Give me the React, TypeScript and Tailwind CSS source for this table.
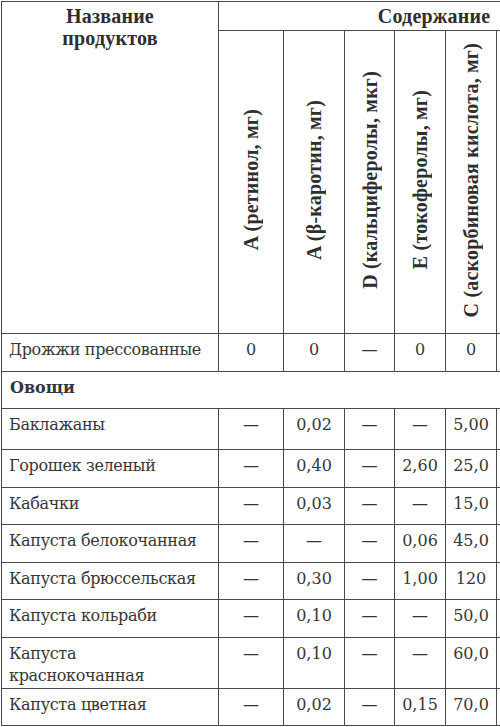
const columns = [
  "A (ретинол, мг)",
  "A (β-каротин, мг)",
  "D (кальциферолы, мкг)",
  "E (токоферолы, мг)",
  "C (аскорбиновая кислота, мг)",
  "",
  "",
  "",
];

type Row = { name: string; values: string[]; height: string } | { group: string; height: string };

const rows: Row[] = [
  { name: "Дрожжи прессованные", values: ["0", "0", "—", "0", "0"], height: "h-[38px]" },
  { group: "Овощи", height: "h-[37px]" },
  { name: "Баклажаны", values: ["—", "0,02", "—", "—", "5,00"], height: "h-[41px]" },
  { name: "Горошек зеленый", values: ["—", "0,40", "—", "2,60", "25,0"], height: "h-[38px]" },
  { name: "Кабачки", values: ["—", "0,03", "—", "—", "15,0"], height: "h-[37px]" },
  { name: "Капуста белокочанная", values: ["—", "—", "—", "0,06", "45,0"], height: "h-[38px]" },
  { name: "Капуста брюссельская", values: ["—", "0,30", "—", "1,00", "120"], height: "h-[37px]" },
  { name: "Капуста кольраби", values: ["—", "0,10", "—", "—", "50,0"], height: "h-[38px]" },
  { name: "Капуста краснокочанная", values: ["—", "0,10", "—", "—", "60,0"], height: "h-[51px]" },
  { name: "Капуста цветная", values: ["—", "0,02", "—", "0,15", "70,0"], height: "h-[37px]" },
];

const colWidths = ["w-[217px]", "w-[65px]", "w-[61px]", "w-[50px]", "w-[51px]", "w-[51px]", "w-[51px]", "w-[51px]", "w-[51px]"];

export default function App() {
  return (
    <div className="w-[500px] h-[727px] overflow-hidden bg-white pl-px pt-px">
      <table className="table-fixed border-collapse w-[648px] text-[#363636] font-['DejaVu_Serif',serif] text-[16px] leading-[22px]">
        <colgroup>
          {colWidths.map((w, i) => (
            <col key={i} className={w} />
          ))}
        </colgroup>
        <thead className="font-['Liberation_Serif',serif] font-bold text-[20px] tracking-[0.01em] text-[#2e2e2e]">
          <tr className="h-[29px]">
            <th rowSpan={2} className="border border-[#4a4a4a] align-top text-center pt-[3px] font-bold">
              Название
              <br />
              продуктов
            </th>
            <th colSpan={8} className="border border-[#4a4a4a] align-top text-center pt-[3px] font-bold">
              Содержание
            </th>
          </tr>
          <tr className="h-[303px]">
            {columns.map((c, i) => (
              <th key={i} className="border border-[#4a4a4a] align-middle text-center font-bold">
                <span className="inline-block [writing-mode:vertical-rl] rotate-180 whitespace-nowrap">
                  {c}
                </span>
              </th>
            ))}
          </tr>
        </thead>
        <tbody>
          {rows.map((r, i) =>
            "group" in r ? (
              <tr key={i} className={r.height}>
                <td colSpan={9} className="border border-[#4a4a4a] align-top pt-[5px] pl-[8px] font-bold">
                  {r.group}
                </td>
              </tr>
            ) : (
              <tr key={i} className={r.height}>
                <td className="border border-[#4a4a4a] align-top pt-[5px] pl-[7px] pr-2 tracking-[-0.02em]">{r.name}</td>
                {r.values.map((v, j) => (
                  <td key={j} className="border border-[#4a4a4a] align-top pt-[5px] text-center">
                    {v}
                  </td>
                ))}
                <td className="border border-[#4a4a4a]" />
                <td className="border border-[#4a4a4a]" />
                <td className="border border-[#4a4a4a]" />
              </tr>
            )
          )}
        </tbody>
      </table>
    </div>
  );
}
